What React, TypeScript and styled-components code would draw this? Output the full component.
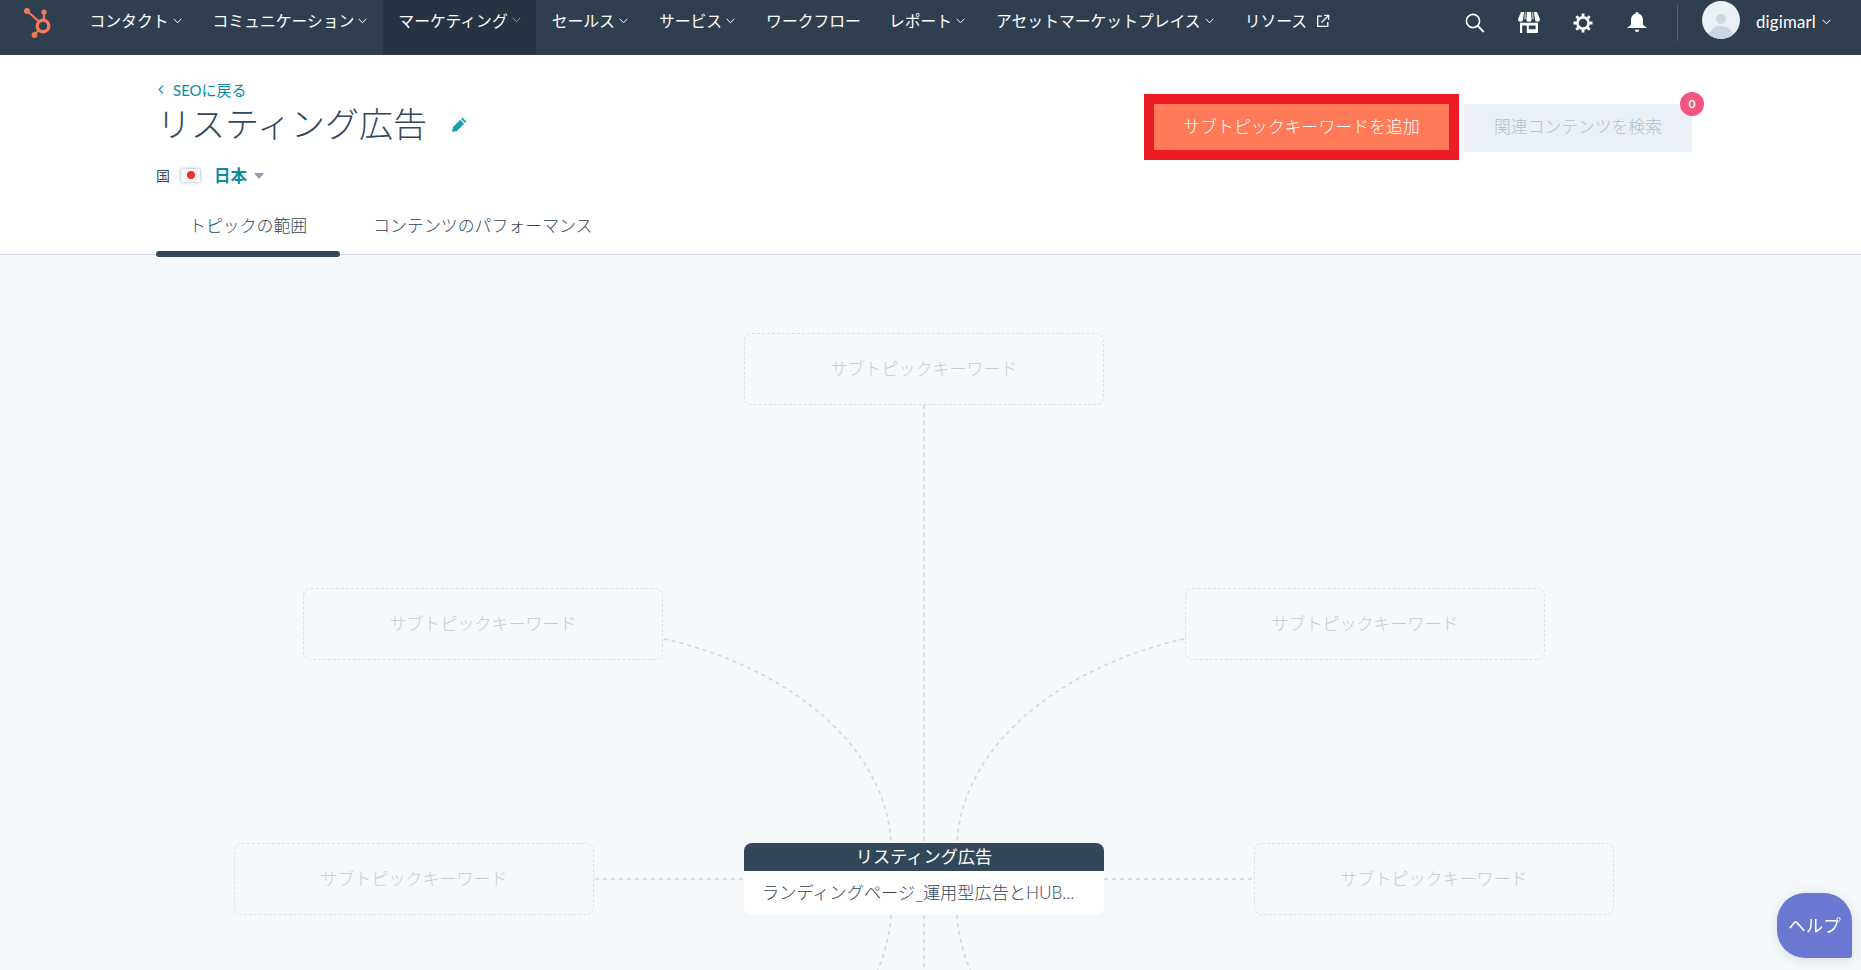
import React from "react";
import styled, { createGlobalStyle } from "styled-components";

const FONT = `Lato, "Noto Sans CJK JP", sans-serif`;

const Global = createGlobalStyle`
  html, body { margin: 0; padding: 0; background: #f5f8fa; }
  body { font-family: ${FONT}; color: #33475b; }
  * { box-sizing: border-box; }
`;

const Page = styled.div`
  display: flex;
  flex-direction: column;
  height: 100vh;
  overflow: hidden;
`;

const Nav = styled.nav`
  display: flex;
  flex: none;
  height: 55px;
  background: #2f3f50;
  color: #fff;
`;

const LogoBox = styled.a`
  flex: none;
  display: block;
  width: 74px;
  height: 50px;
  padding-left: 10px;
`;

const NavItem = styled.a<{ $active?: boolean; $plain?: boolean }>`
  display: flex;
  align-items: center;
  gap: 4px;
  padding: 0 ${(p) => (p.$plain ? "12.5px" : "15.5px")} 14px 15.5px;
  font-size: 15.8px;
  font-weight: 400;
  white-space: nowrap;
  background: ${(p) => (p.$active ? "#253342" : "transparent")};
  margin-bottom: ${(p) => (p.$active ? "1px" : "0")};
`;

const NavRight = styled.div`
  display: flex;
  align-items: center;
  margin-left: auto;
  padding: 0 30px 10px 0;
`;

const IconBox = styled.span`
  display: flex;
  align-items: center;
  justify-content: center;
  width: 54px;
  height: 24px;
`;

const Divider = styled.span`
  width: 1px;
  height: 36px;
  margin: 0 24px 0 13px;
  background: #51667c;
`;

const Avatar = styled.span`
  display: block;
  width: 38px;
  height: 38px;
  margin-bottom: 5px;
  border-radius: 50%;
  overflow: hidden;
  background: #eaf0f6;
`;

const UserName = styled.span`
  display: flex;
  align-items: center;
  gap: 6px;
  margin: 0 0 2px 16px;
  font-size: 16.8px;
  letter-spacing: 0.2px;
`;

const Header = styled.header`
  position: relative;
  z-index: 1;
  flex: none;
  display: flex;
  justify-content: space-between;
  height: 200px;
  padding: 0 169px 0 156px;
  background: #fff;
  border-bottom: 1px solid #cbd6e2;
`;

const HeaderLeft = styled.div`
  display: flex;
  flex-direction: column;
  & > * {
    flex: none;
  }
`;

const BackLink = styled.a`
  display: flex;
  align-items: center;
  gap: 9px;
  height: 20px;
  margin: 24px 0 0 2px;
  font-size: 15px;
  color: #0b8ca3;
`;

const TitleRow = styled.div`
  display: flex;
  align-items: center;
  gap: 25px;
  height: 44px;
  margin: 3px 0 0 1px;
`;

const Title = styled.h1`
  margin: 0;
  font-size: 34px;
  font-weight: 300;
  line-height: 44px;
  color: #33475b;
`;

const CountryRow = styled.div`
  display: flex;
  align-items: center;
  height: 24px;
  margin-top: 17px;
`;

const CountryLabel = styled.span`
  width: 25px;
  font-size: 14px;
`;

const Flag = styled.span`
  position: relative;
  display: flex;
  align-items: center;
  justify-content: center;
  width: 19px;
  height: 13px;
  margin-right: 14px;
  background: #f8f6f6;
  box-shadow: 0 0 3px rgba(51, 71, 91, 0.5);
  &::after {
    content: "";
    width: 8px;
    height: 8px;
    border-radius: 50%;
    background: #e8303a;
  }
`;

const CountryValue = styled.a`
  display: flex;
  align-items: center;
  gap: 7px;
  font-size: 16.5px;
  font-weight: 700;
  color: #0b8ca3;
  &::after {
    content: "";
    margin-top: 2px;
    border-left: 5.5px solid transparent;
    border-right: 5.5px solid transparent;
    border-top: 6px solid #8b9db3;
  }
`;

const Tabs = styled.div`
  display: flex;
  height: 58px;
  margin-top: 12px;
`;

const Tab = styled.a<{ $active?: boolean }>`
  position: relative;
  display: block;
  padding: 15px 33px 0;
  font-size: 16.9px;
  font-weight: 300;
  line-height: 24px;
  white-space: nowrap;
  color: #33475b;
  &::after {
    content: "";
    display: ${(p) => (p.$active ? "block" : "none")};
    position: absolute;
    left: 0;
    right: 0;
    bottom: 0;
    height: 6px;
    border-radius: 3px;
    background: #33475b;
  }
`;

const Actions = styled.div`
  display: flex;
  align-items: flex-start;
  gap: 5px;
  margin-top: 39px;
`;

const Highlight = styled.span`
  display: block;
  border: 10px solid #ed1c24;
`;

const PrimaryButton = styled.button`
  display: block;
  width: 295px;
  height: 46px;
  padding: 0 0 4px;
  border: 0;
  background: #ff7a59;
  color: #fff;
  font-family: ${FONT};
  font-size: 16.9px;
  font-weight: 300;
`;

const SecondaryButton = styled.button`
  position: relative;
  width: 228px;
  height: 48px;
  margin-top: 10px;
  padding: 0 0 4px;
  border: 0;
  border-radius: 3px;
  background: #eaf0f6;
  color: #b0c1d4;
  font-family: ${FONT};
  font-size: 16.8px;
  font-weight: 300;
`;

const Badge = styled.span`
  position: absolute;
  top: -12px;
  right: -12px;
  width: 24px;
  height: 24px;
  border-radius: 50%;
  background: #f2547d;
  color: #fff;
  font-size: 12px;
  font-weight: 700;
  line-height: 24px;
  text-align: center;
`;

const Canvas = styled.main`
  position: relative;
  flex: 1;
  overflow: hidden;
  background: #f5f8fa;
`;

const Edges = styled.svg`
  position: absolute;
  inset: 0;
  width: 1861px;
  height: 715px;
`;

const PlaceholderNode = styled.div<{ $x: number; $y: number }>`
  position: absolute;
  left: ${(p) => p.$x}px;
  top: ${(p) => p.$y}px;
  display: flex;
  align-items: center;
  justify-content: center;
  width: 360px;
  height: 72px;
  padding-bottom: 3px;
  border: 1px dashed #d8dfe7;
  border-radius: 8px;
  font-size: 17px;
  font-weight: 300;
  color: #c2ccd8;
`;

const CenterNode = styled.div`
  position: absolute;
  left: 744px;
  top: 588px;
  width: 360px;
  height: 72px;
  border-radius: 8px;
  overflow: hidden;
  background: #fff;
`;

const CenterTitle = styled.div`
  height: 28px;
  background: #33475b;
  color: #fff;
  font-size: 17.2px;
  font-weight: 400;
  line-height: 28px;
  text-align: center;
`;

const CenterBody = styled.div`
  padding: 7px 18px 0;
  font-size: 17.2px;
  font-weight: 300;
  line-height: 30px;
  white-space: nowrap;
  color: #33475b;
`;

const HelpButton = styled.button`
  position: fixed;
  left: 1777px;
  top: 893px;
  width: 75px;
  height: 65px;
  padding: 0 0 2px;
  border: 0;
  border-radius: 28px 28px 3px 28px;
  background: #6a78d1;
  box-shadow: 0 2px 12px rgba(51, 71, 91, 0.14);
  color: #fff;
  font-family: ${FONT};
  font-size: 17.5px;
  font-weight: 400;
`;

const Chevron = ({ color = "#fff" }: { color?: string }) => (
  <svg width="9" height="6" viewBox="0 0 9 6" fill="none">
    <path d="M.7.8 4.500 4.800 8.300.8" stroke={color} strokeWidth="1" />
  </svg>
);

const Logo = () => (
  <svg width="60" height="50" viewBox="0 0 60 50" fill="none">
    <g stroke="#f0795a">
      <circle cx="33" cy="26" r="5.8" strokeWidth="3.4" />
      <path d="M17 11 29 21.500M34 12v8M24 35l5-5" strokeWidth="2.2" />
    </g>
    <g fill="#f0795a">
      <circle cx="17" cy="11" r="3" />
      <circle cx="34" cy="12" r="2.6" />
      <circle cx="24.500" cy="35" r="2.9" />
    </g>
  </svg>
);

const ExternalIcon = () => (
  <svg width="14" height="14" viewBox="0 0 14 14" fill="none" stroke="#fff" strokeWidth="1.3" style={{ marginLeft: 5 }}>
    <path d="M6 2.200H1.700v10.100h10.100V8" />
    <path d="M5.500 8.500 12 2M8 1.400h4.600V6" />
  </svg>
);

const SearchIcon = () => (
  <svg width="20" height="20" viewBox="0 0 20 20" fill="none" stroke="#fff">
    <circle cx="8" cy="8" r="6.6" strokeWidth="1.6" />
    <path d="m12.800 12.800 6 6.200" strokeWidth="1.8" />
  </svg>
);

const StoreIcon = () => (
  <svg width="22" height="21" viewBox="0 0 22 21">
    <path fill="#fff" d="M3 0h3.200L5 7.200a2.400 2.400 0 0 1-5 0zM9 0h4l.6 7.200a2.600 2.600 0 0 1-5.200 0zM15.800 0H19l3 7.200a2.400 2.400 0 0 1-5 0z" />
    <path fill="#9fb0c0" d="M7 0h1.400l-.6 7.200H6zM13.600 0H15l1 7.200h-1.800z" />
    <path fill="#fff" fillRule="evenodd" d="M2 10.800h18V21H2zm2.200 2.600V21h4.600v-7.600zm6.600 0v3.800h6.800v-3.800z" />
  </svg>
);

const GearIcon = () => (
  <svg width="20" height="20" viewBox="0 0 20 20" fill="none" stroke="#fff">
    <circle cx="10" cy="10" r="5.6" strokeWidth="2.6" />
    <path
      d="M10 .5v3.500M10 16v3.500M.5 10H4M16 10h3.500M3.300 3.300l2.500 2.500M14.200 14.200l2.500 2.500M3.300 16.700l2.500-2.500M14.200 5.800l2.500-2.500"
      strokeWidth="2.8"
    />
  </svg>
);

const BellIcon = () => (
  <svg width="20" height="21" viewBox="0 0 20 21">
    <path
      fill="#fff"
      d="M10 0c1 0 1.500.7 1.500 1.600C14.600 2.400 16 5 16 8v3.500c0 1.500.8 2.500 3.500 3.800V16H.5v-.7C3.200 14 4 13 4 11.500V8c0-3 1.400-5.600 4.500-6.400C8.500.7 9 0 10 0zM7.800 17.800h4.400a2.200 2.200 0 0 1-4.400 0z"
    />
  </svg>
);

const AvatarArt = () => (
  <svg width="38" height="38" viewBox="0 0 38 38">
    <circle cx="19" cy="18" r="5" fill="#cbd6e2" />
    <path d="M6 38c1-9 6-13 13-13s12 4 13 13z" fill="#cbd6e2" />
  </svg>
);

const Pencil = () => (
  <svg width="15" height="15" viewBox="0 0 15 15" fill="#1f9bb0">
    <path d="M10.500.6 14.400 4.500 13 5.900 9.100 2zM8.300 2.800l3.900 3.900-7.300 7.300L0 15l1-4.900z" />
  </svg>
);

const BackChevron = () => (
  <svg width="6" height="9" viewBox="0 0 6 9" fill="none">
    <path d="M5 .7 1.200 4.500 5 8.300" stroke="#0b8ca3" strokeWidth="1.2" />
  </svg>
);

const NAV = [
  { label: "コンタクト" },
  { label: "コミュニケーション" },
  { label: "マーケティング", active: true },
  { label: "セールス" },
  { label: "サービス" },
  { label: "ワークフロー", plain: true },
  { label: "レポート" },
  { label: "アセットマーケットプレイス" },
];

const PLACEHOLDERS = [
  { x: 744, y: 78 },
  { x: 303, y: 333 },
  { x: 1185, y: 333 },
  { x: 234, y: 588 },
  { x: 1254, y: 588 },
];

const EDGE_PATHS = [
  "M924 405V843",
  "M924 915V980",
  "M595 879H744",
  "M1104 879H1254",
  "M664 639C780 665 885 740 891 843",
  "M1184 639C1068 665 963 740 957 843",
  "M891 915C885 1018 780 1093 664 1119",
  "M957 915C963 1018 1068 1093 1184 1119",
];

export default function App() {
  return (
    <Page>
      <Global />
      <Nav>
        <LogoBox>
          <Logo />
        </LogoBox>
        {NAV.map((n) => (
          <NavItem key={n.label} $active={n.active} $plain={n.plain}>
            {n.label}
            {!n.plain && <Chevron color={n.active ? "#e8735a" : "#fff"} />}
          </NavItem>
        ))}
        <NavItem>
          リソース
          <ExternalIcon />
        </NavItem>
        <NavRight>
          <IconBox>
            <SearchIcon />
          </IconBox>
          <IconBox>
            <StoreIcon />
          </IconBox>
          <IconBox>
            <GearIcon />
          </IconBox>
          <IconBox>
            <BellIcon />
          </IconBox>
          <Divider />
          <Avatar>
            <AvatarArt />
          </Avatar>
          <UserName>
            digimarl
            <Chevron />
          </UserName>
        </NavRight>
      </Nav>
      <Header>
        <HeaderLeft>
          <BackLink>
            <BackChevron />
            SEOに戻る
          </BackLink>
          <TitleRow>
            <Title>リスティング広告</Title>
            <Pencil />
          </TitleRow>
          <CountryRow>
            <CountryLabel>国</CountryLabel>
            <Flag />
            <CountryValue>日本</CountryValue>
          </CountryRow>
          <Tabs>
            <Tab $active>トピックの範囲</Tab>
            <Tab>コンテンツのパフォーマンス</Tab>
          </Tabs>
        </HeaderLeft>
        <Actions>
          <Highlight>
            <PrimaryButton>サブトピックキーワードを追加</PrimaryButton>
          </Highlight>
          <SecondaryButton>
            関連コンテンツを検索
            <Badge>0</Badge>
          </SecondaryButton>
        </Actions>
      </Header>
      <Canvas>
        <Edges viewBox="0 255 1861 715" fill="none" stroke="#cbd6e2" strokeWidth="1.6" strokeDasharray="4 4">
          {EDGE_PATHS.map((d) => (
            <path key={d} d={d} />
          ))}
        </Edges>
        {PLACEHOLDERS.map((p) => (
          <PlaceholderNode key={`${p.x}-${p.y}`} $x={p.x} $y={p.y}>
            サブトピックキーワード
          </PlaceholderNode>
        ))}
        <CenterNode>
          <CenterTitle>リスティング広告</CenterTitle>
          <CenterBody>ランディングページ_運用型広告とHUB...</CenterBody>
        </CenterNode>
      </Canvas>
      <HelpButton>ヘルプ</HelpButton>
    </Page>
  );
}
